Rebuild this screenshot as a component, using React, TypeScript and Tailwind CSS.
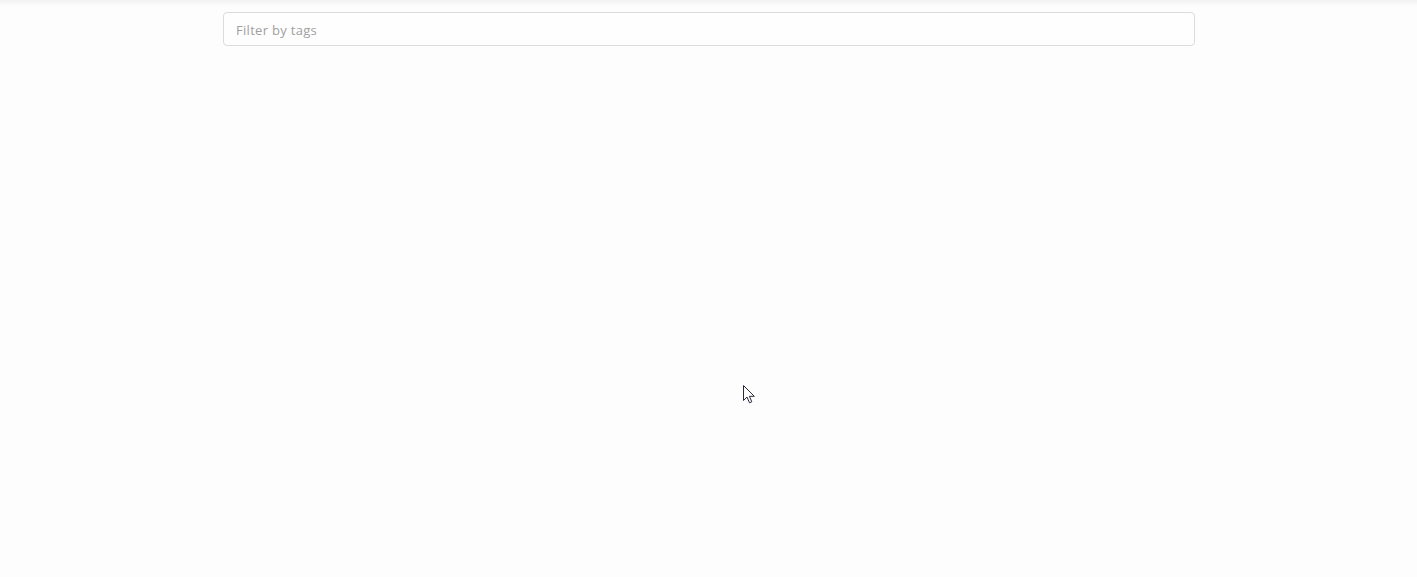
import React from "react";

export default function App() {
  return (
    <div className="relative w-[1417px] h-[577px] bg-[#fdfdfd] overflow-hidden" style={{ fontFamily: '"Open Sans", "Noto Sans", sans-serif' }}>
      <div className="h-[6px] bg-gradient-to-b from-[#f2f2f2] to-[#fdfdfd]" />
      <div className="flex justify-start pl-[223px] pt-[6px]">
        <input
          type="text"
          placeholder="Filter by tags"
          className="w-[972px] h-[34px] rounded-[4px] border border-[#dcdcdc] bg-[#fefefe] px-[12px] pt-[2px] text-[13px] tracking-[0.3px] text-[#555] placeholder:text-[#a0a0a0] outline-none"
        />
      </div>
      <svg
        className="absolute left-[742px] top-[384px]"
        width="14"
        height="21"
        viewBox="0 0 14 21"
      >
        <path
          d="M1.5 1.5 L1.5 16.5 L5 13 L7.5 18.8 L9.8 17.8 L7.4 12.3 L12.3 12.3 Z"
          fill="#fff"
          stroke="#2a2a3a"
          strokeWidth="1"
          strokeLinejoin="miter"
        />
      </svg>
    </div>
  );
}
